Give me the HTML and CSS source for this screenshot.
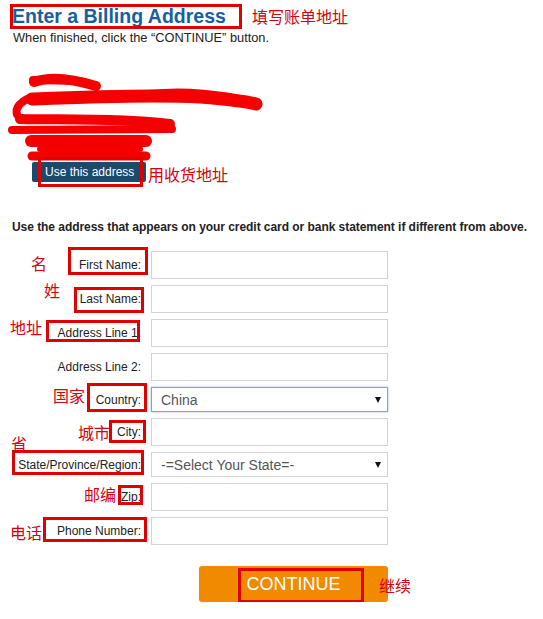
FILE: index.html
```html
<!DOCTYPE html>
<html lang="en">
<head>
    <meta charset="UTF-8">
    <meta name="viewport" content="width=device-width, initial-scale=1.0">
    <title>Billing Address</title>
    <link rel="stylesheet" href="styles.css">
</head>
<body>
    <div class="page">
        <h1 class="title">Enter a Billing Address</h1>
        <p class="hint">When finished, click the “CONTINUE” button.</p>

        <div class="saved-address">
            <svg class="scribble" width="270" height="102" viewBox="0 58 270 102">
                <g fill="none" stroke="#f50000" stroke-linecap="round" stroke-linejoin="round">
                    <path d="M34 80 C50 74, 70 76, 96 84" stroke-width="10"/>
                    <path d="M33 78 L80 79" stroke-width="8"/>
                    <path d="M32 97 C80 95, 150 92, 200 95 C225 97, 245 99, 256 102" stroke-width="13"/>
                    <path d="M150 93 C175 90, 200 91, 230 96" stroke-width="10"/>
                    <path d="M32 95 C18 100, 12 110, 20 116" stroke-width="8"/>
                    <path d="M20 117 C60 118, 120 116, 170 122" stroke-width="10"/>
                    <path d="M12 128 L172 127" stroke-width="8"/>
                    <path d="M31 139 L146 139" stroke-width="12"/>
                    <path d="M32 154 L146 154" stroke-width="9"/>
                    <path d="M40 147 L140 147" stroke-width="6"/>
                </g>
            </svg>
            <button class="use-btn" type="button">Use this address</button>
        </div>

        <p class="instruction">Use the address that appears on your credit card or bank statement if different from above.</p>

        <form class="billing-form">
            <div class="row">
                <label>First Name:</label>
                <input type="text">
            </div>
            <div class="row">
                <label>Last Name:</label>
                <input type="text">
            </div>
            <div class="row">
                <label>Address Line 1:</label>
                <input type="text">
            </div>
            <div class="row">
                <label>Address Line 2:</label>
                <input type="text">
            </div>
            <div class="row">
                <label>Country:</label>
                <div class="select-wrap focused">
                    <select><option>China</option></select>
                </div>
            </div>
            <div class="row">
                <label>City:</label>
                <input type="text">
            </div>
            <div class="row">
                <label>State/Province/Region:</label>
                <div class="select-wrap">
                    <select><option>-=Select Your State=-</option></select>
                </div>
            </div>
            <div class="row">
                <label>Zip:</label>
                <input type="text">
            </div>
            <div class="row">
                <label>Phone Number:</label>
                <input type="text">
            </div>
        </form>

        <div class="actions">
            <button class="continue-btn" type="button">CONTINUE</button>
        </div>

        <!-- annotation layer -->
        <div class="markup">
            <div class="box box-title"></div>
            <div class="box box-use"></div>
            <div class="box box-first"></div>
            <div class="box box-last"></div>
            <div class="box box-addr"></div>
            <div class="box box-country"></div>
            <div class="box box-city"></div>
            <div class="box box-state"></div>
            <div class="box box-zip"></div>
            <div class="box box-phone"></div>
            <div class="box box-continue"></div>

            <span class="note note-title">填写账单地址</span>
            <span class="note note-use">用收货地址</span>
            <span class="note note-first">名</span>
            <span class="note note-last">姓</span>
            <span class="note note-addr">地址</span>
            <span class="note note-country">国家</span>
            <span class="note note-city">城市</span>
            <span class="note note-state">省</span>
            <span class="note note-zip">邮编</span>
            <span class="note note-phone">电话</span>
            <span class="note note-continue">继续</span>
        </div>
    </div>
</body>
</html>
```

FILE: styles.css
```css
body {
    margin: 0;
    padding: 0;
    background-color: #ffffff;
    font-family: "Liberation Sans", Arial, sans-serif;
    color: #222222;
}
.page {
    position: relative;
    padding: 4px 12px 0 12px;
}
.title {
    margin: 0;
    font-size: 19.5px;
    line-height: 24px;
    font-weight: bold;
    color: #17609d;
}
.hint {
    margin: 3px 0 0 1px;
    font-size: 12.8px;
    line-height: 14px;
}
.saved-address {
    margin-top: 15px;
}
.scribble {
    display: block;
    margin-left: -12px;
}
.use-btn {
    display: block;
    margin: 0 0 0 20px;
    height: 20px;
    padding: 0 12px 0 13px;
    border: none;
    border-radius: 2px;
    background-color: #1c4a6b;
    color: #ffffff;
    font-family: "Liberation Sans", Arial, sans-serif;
    font-size: 12px;
}
.instruction {
    margin: 38px 0 0 0;
    font-size: 12px;
    line-height: 14px;
    font-weight: bold;
    letter-spacing: -0.05px;
    white-space: nowrap;
}
.billing-form {
    display: flex;
    flex-direction: column;
    gap: 6px;
    margin-top: 17px;
}
.row {
    display: grid;
    grid-template-columns: 129px 237px;
    column-gap: 10px;
    align-items: center;
}
.row label {
    text-align: right;
    font-size: 12px;
    white-space: nowrap;
}
.row input {
    box-sizing: border-box;
    width: 237px;
    height: 28px;
    margin: 0;
    border: 1px solid #d3d3d3;
    background-color: #ffffff;
}
.select-wrap {
    position: relative;
    width: 237px;
}
.select-wrap select {
    box-sizing: border-box;
    display: block;
    width: 237px;
    height: 25px;
    margin: 0;
    padding: 0 0 0 9px;
    border: 1px solid #d3d3d3;
    background-color: #ffffff;
    color: #555555;
    font-family: "Liberation Sans", Arial, sans-serif;
    font-size: 14px;
    -webkit-appearance: none;
    appearance: none;
}
.select-wrap.focused select {
    border-color: #7fa5d2;
    box-shadow: 0 0 2px rgba(90, 140, 210, 0.6);
}
.select-wrap::after {
    content: "";
    position: absolute;
    right: 7px;
    top: 10px;
    border-left: 3px solid transparent;
    border-right: 3px solid transparent;
    border-top: 6px solid #111111;
}
.actions {
    margin: 21px 0 0 187px;
}
.continue-btn {
    width: 189px;
    height: 36px;
    border: none;
    border-radius: 3px;
    background-color: #f28a00;
    color: #ffffff;
    font-family: "Liberation Sans", Arial, sans-serif;
    font-size: 18px;
}

/* annotations drawn over the page */
.markup {
    position: absolute;
    top: 0;
    left: 0;
    width: 100%;
    height: 100%;
    pointer-events: none;
}
.box {
    position: absolute;
    box-sizing: border-box;
    border: 3px solid #e00000;
}
.box-title { left: 10px; top: 4px; width: 232px; height: 25px; }
.box-use { left: 38px; top: 157px; width: 105px; height: 30px; }
.box-first { left: 68px; top: 247px; width: 80px; height: 28px; }
.box-last { left: 74px; top: 287px; width: 70px; height: 26px; }
.box-addr { left: 46px; top: 320px; width: 94px; height: 22px; }
.box-country { left: 87px; top: 383px; width: 60px; height: 29px; }
.box-city { left: 109px; top: 420px; width: 37px; height: 23px; }
.box-state { left: 12px; top: 450px; width: 132px; height: 25px; }
.box-zip { left: 118px; top: 485px; width: 25px; height: 20px; }
.box-phone { left: 43px; top: 517px; width: 104px; height: 25px; }
.box-continue { left: 238px; top: 568px; width: 126px; height: 35px; }

.note {
    position: absolute;
    font-family: "Noto Sans CJK SC", sans-serif;
    font-size: 16px;
    line-height: 1;
    color: #d8000c;
    white-space: nowrap;
}
.note-title { left: 252px; top: 8px; }
.note-use { left: 148px; top: 166px; }
.note-first { left: 31px; top: 255px; }
.note-last { left: 44px; top: 282px; }
.note-addr { left: 10px; top: 319px; }
.note-country { left: 53px; top: 387px; }
.note-city { left: 78px; top: 424px; }
.note-state { left: 11px; top: 435px; }
.note-zip { left: 84px; top: 486px; }
.note-phone { left: 10px; top: 524px; }
.note-continue { left: 379px; top: 577px; }
```
